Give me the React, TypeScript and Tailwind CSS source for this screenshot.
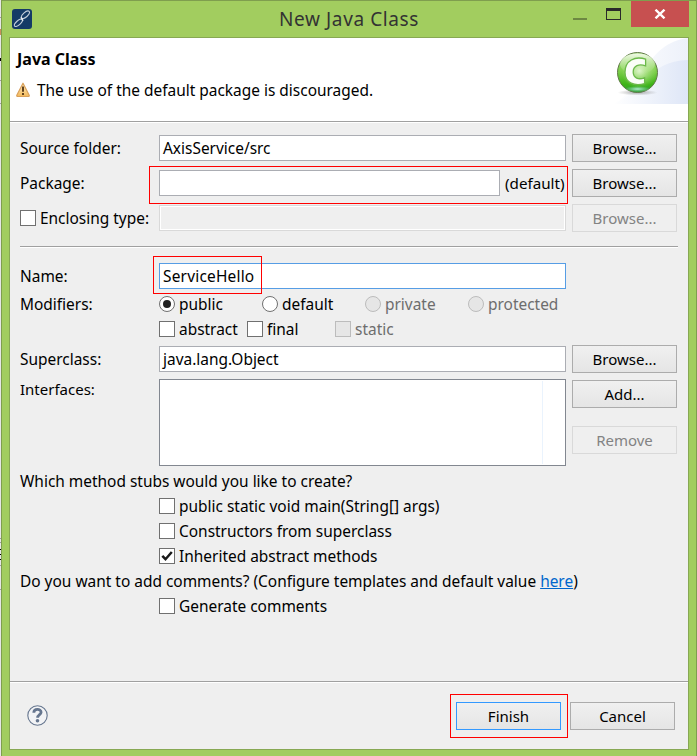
import type { ReactNode } from 'react'
import { clsx } from 'clsx'

function Txt({ children, className }: { children: ReactNode; className?: string }) {
  return <span className={clsx('whitespace-nowrap', className)}>{children}</span>
}

function Button({ children, disabled, primary }: { children: ReactNode; disabled?: boolean; primary?: boolean }) {
  return (
    <button
      disabled={disabled}
      className={clsx(
        'flex h-7 w-[105px] shrink-0 items-center justify-center border text-[15px] leading-4 whitespace-nowrap',
        disabled
          ? 'border-[#d9d9d9] bg-[#efefef] text-[#838383]'
          : 'bg-gradient-to-b from-[#f0f0f0] to-[#e5e5e5] text-black',
        !disabled && (primary ? 'border-[#3399ff]' : 'border-[#acacac]'),
      )}
    >
      {children}
    </button>
  )
}

function Field({ value, className }: { value?: string; className?: string }) {
  return (
    <div className={clsx('flex h-[26px] items-center border pl-[3px] leading-4', className ?? 'w-[407px] border-[#abadb3] bg-white')}>
      {value && <Txt>{value}</Txt>}
    </div>
  )
}

function Check({ label, checked, disabled, className }: { label: string; checked?: boolean; disabled?: boolean; className?: string }) {
  return (
    <label className={clsx('flex h-4 items-center gap-1', disabled && 'text-[#6d6d6d]', className)}>
      <span
        className={clsx(
          'flex size-4 shrink-0 items-center justify-center border',
          disabled ? 'border-[#bcbcbc] bg-[#e6e6e6]' : 'border-[#707070] bg-white',
        )}
      >
        {checked && (
          <svg width="14" height="14" viewBox="0 0 14 14" fill="none">
            <path d="M2.3 6.8 5.5 10.2 11.8 3" stroke="#1a1a1a" strokeWidth="2.5" />
          </svg>
        )}
      </span>
      <Txt>{label}</Txt>
    </label>
  )
}

function Radio({ label, checked, disabled }: { label: string; checked?: boolean; disabled?: boolean }) {
  return (
    <label className={clsx('flex h-4 w-[103px] items-center gap-1', disabled && 'text-[#6d6d6d]')}>
      <span
        className={clsx(
          'flex size-4 shrink-0 items-center justify-center rounded-full border',
          disabled ? 'border-[#bcbcbc] bg-[#e6e6e6]' : 'border-[#707070] bg-white',
        )}
      >
        {checked && <span className="size-2 rounded-full bg-[#212121]" />}
      </span>
      <Txt>{label}</Txt>
    </label>
  )
}

function Separator({ className }: { className?: string }) {
  return <div className={clsx('h-0.5 border-t border-[#a0a0a0] bg-white', className)} />
}

function Label({ children }: { children: ReactNode }) {
  return <div className="w-[139px] shrink-0 whitespace-nowrap">{children}</div>
}

function AppIcon() {
  return (
    <svg width="20" height="20" viewBox="0 0 20 20" fill="none">
      <rect x="0" y="0" width="20" height="20" rx="3" fill="#143a66" />
      <ellipse cx="13.4" cy="5.8" rx="5" ry="2.3" transform="rotate(-42 13.4 5.8)" stroke="#c3cedb" strokeWidth="1.1" />
      <ellipse cx="6.4" cy="13.8" rx="5" ry="2.1" transform="rotate(-42 6.4 13.8)" stroke="#c3cedb" strokeWidth="1.1" />
      <path d="M9.3 8.2C9.2 10.2 11 9.6 10.7 11.8" stroke="#e3e9f0" strokeWidth="1.4" />
    </svg>
  )
}

function WarningIcon() {
  return (
    <svg width="14" height="16" viewBox="0 0 14 16">
      <defs>
        <linearGradient id="warn" x1="0" y1="0" x2="0" y2="1">
          <stop offset="0" stopColor="#fff0c4" />
          <stop offset="1" stopColor="#f3b95a" />
        </linearGradient>
      </defs>
      <path d="M7 1.2 13.2 13.2Q13.5 14.5 12.3 14.5H1.7Q.5 14.5.8 13.2Z" fill="url(#warn)" stroke="#d9a05a" strokeWidth="1.2" strokeLinejoin="round" />
      <path d="M7 4.5V9.8M7 11V13" stroke="#593a1a" strokeWidth="1.9" />
    </svg>
  )
}

function ClassBanner() {
  return (
    <svg width="75" height="66" viewBox="0 0 75 66">
      <defs>
        <linearGradient id="sweep" x1="0" y1="0" x2="1" y2="0">
          <stop offset="0" stopColor="#fff" />
          <stop offset="1" stopColor="#dee6f7" />
        </linearGradient>
        <linearGradient id="sweepLight" x1="0" y1="0" x2="1" y2="0">
          <stop offset="0" stopColor="#fff" />
          <stop offset="1" stopColor="#edf1fa" />
        </linearGradient>
        <linearGradient id="ball" x1="0" y1="0" x2="0" y2="1">
          <stop offset="0" stopColor="#a9de82" />
          <stop offset=".45" stopColor="#7fd04c" />
          <stop offset=".8" stopColor="#3db316" />
          <stop offset="1" stopColor="#2f9d3c" />
        </linearGradient>
        <radialGradient id="glow" cx=".55" cy=".45" r=".5">
          <stop offset="0" stopColor="#e2f7cf" />
          <stop offset="1" stopColor="#a6e07c" stopOpacity="0" />
        </radialGradient>
        <linearGradient id="gloss" x1="0" y1="0" x2="0" y2="1">
          <stop offset="0" stopColor="#f0fae6" />
          <stop offset="1" stopColor="#c3eaa5" stopOpacity="0" />
        </linearGradient>
        <radialGradient id="shade">
          <stop offset="0" stopColor="#777" stopOpacity=".6" />
          <stop offset="1" stopColor="#777" stopOpacity="0" />
        </radialGradient>
        <radialGradient id="foot">
          <stop offset="0" stopColor="#b4ecd6" />
          <stop offset="1" stopColor="#7ed49c" stopOpacity="0" />
        </radialGradient>
      </defs>
      <path d="M0 66C30 52 32 5 75 0V66Z" fill="url(#sweepLight)" />
      <path d="M0 66C30 55 34 23 75 22V66Z" fill="url(#sweep)" />
      <ellipse cx="24.5" cy="54.5" rx="20" ry="3" fill="url(#shade)" />
      <circle cx="24.5" cy="34.5" r="20" fill="url(#ball)" stroke="#62794a" />
      <circle cx="24.5" cy="34.5" r="18" fill="url(#glow)" />
      <ellipse cx="24.5" cy="26" rx="17.5" ry="10.5" fill="url(#gloss)" />
      <ellipse cx="24.5" cy="51" rx="13" ry="3" fill="url(#foot)" />
      <path
        d="M32.6 21.2V27.8C26 25.6 20.2 27.6 20.2 34C20.2 40.2 25.5 42 31.6 39.8V45.6C22 48.6 12 45.2 12 34.2C12 22.6 22 17.6 32.6 21.2Z"
        fill="#fbfef8"
        stroke="#6cb94a"
        strokeWidth="1.3"
      />
    </svg>
  )
}

function HelpIcon() {
  return (
    <svg width="21" height="21" viewBox="0 0 21 21" fill="none">
      <circle cx="10.5" cy="10.5" r="9.7" fill="#f2f3f5" stroke="#66768f" strokeWidth="1.1" />
      <path d="M6.8 7.7C6.8 3.4 14.1 3.4 14.1 7.2C14.1 9.6 10.6 9.6 10.6 12.8" stroke="#66768f" strokeWidth="2.8" />
      <circle cx="10.5" cy="15.8" r="1.8" fill="#66768f" />
    </svg>
  )
}

function TitleBar() {
  return (
    <div className="relative flex h-9 items-start">
      <div className="pt-2 pl-2.5">
        <AppIcon />
      </div>
      <div className="absolute inset-x-0 top-1.5 text-center text-[19px] leading-6 tracking-[0.6px] text-[#333]">New Java Class</div>
      <div className="ml-auto flex pr-[7px]">
        <div className="mt-[17px] mr-[19px] h-0.5 w-3.5 bg-[#6d8842]" />
        <div className="mt-[7px] mr-2.5 h-3 w-[15px] border border-t-3 border-[#2a2a2a]" />
        <div className="flex h-[26px] w-[58px] items-center justify-center bg-[#c75050]">
          <svg width="12" height="10" viewBox="0 0 12 10" className="-ml-px">
            <path d="M1.5.7 10.5 9.3M10.5.7 1.5 9.3" stroke="#fff" strokeWidth="2.4" />
          </svg>
        </div>
      </div>
    </div>
  )
}

// one-pixel edge of the editor window behind the dialog
function BackgroundEdge() {
  return (
    <div className="flex w-px shrink-0 flex-col">
      <div className="mt-[17px] h-px bg-[#a0a0a0]" />
      <div className="mt-[11px] h-1.5 bg-[#c98d5a]" />
      <div className="mt-[23px] h-[3px] bg-black" />
      <div className="mt-[19px] h-px bg-[#a0a0a0]" />
      <div className="mt-[22px] h-px bg-[#a0a0a0]" />
      <div className="mt-[434px] h-px bg-[#a0a0a0]" />
      <div className="mt-[3px] h-px bg-[#a0a0a0]" />
      <div className="mt-[6px] h-px bg-black" />
      <div className="mt-[4px] h-px bg-black" />
      <div className="mt-[4px] h-px bg-black" />
      <div className="mt-[5px] h-px bg-[#a0a0a0]" />
      <div className="mt-[23px] h-px bg-[#a0a0a0]" />
    </div>
  )
}

export default function App() {
  return (
    <div className="flex h-[756px] w-[697px] overflow-hidden bg-[#e6e6e6] font-['Noto_Sans','Open_Sans',sans-serif] text-[15.45px] leading-4 text-black">
      <BackgroundEdge />
      <div className="h-full w-[696px] shrink-0 border-x border-t border-[#7f9e4e] bg-[#a2cd5f] px-[7px]">
        <div className="-mx-[7px]">
          <TitleBar />
        </div>
        <div className="h-[713px] w-[680px] border border-[#87a853] bg-[#efefef]">
          <header className="flex h-[83px] justify-between bg-white">
            <div className="pt-[13px] pl-1.5">
              <div className="pl-px text-base leading-4 font-bold">Java Class</div>
              <div className="mt-[14px] flex items-center gap-[7px]">
                <WarningIcon />
                <Txt className="pt-px">The use of the default package is discouraged.</Txt>
              </div>
            </div>
            <ClassBanner />
          </header>
          <Separator />

          <main className="flex h-[558px] flex-col pt-[11px] pl-2.5">
            <div className="flex h-7 items-center">
              <Label>Source folder:</Label>
              <Field value="AxisService/src" />
              <div className="ml-1.5">
                <Button>Browse...</Button>
              </div>
            </div>
            <div className="relative mt-[7px] flex h-7 items-center">
              <Label>Package:</Label>
              <Field className="w-[341px] border-[#abadb3] bg-white" />
              <div className="w-[66px] pl-[5px] text-[15.2px]">
                <Txt>(default)</Txt>
              </div>
              <div className="ml-1.5">
                <Button>Browse...</Button>
              </div>
              <div className="absolute -top-[3px] left-[129px] h-[38px] w-[419px] border border-[#ff0000]" />
            </div>
            <div className="mt-[7px] flex h-7 items-center">
              <Check label="Enclosing type:" className="w-[139px]" />
              <Field className="w-[407px] border-[#d9d9d9] bg-[#efefef] inset-ring inset-ring-white" />
              <div className="ml-1.5">
                <Button disabled>Browse...</Button>
              </div>
            </div>

            <Separator className="mt-[14px] w-[658px] shrink-0" />

            <div className="relative mt-[15px] flex h-[26px] items-center">
              <Label>Name:</Label>
              <Field value="ServiceHello" className="w-[407px] border-[#569de5] bg-white tracking-[0.2px]" />
              <div className="absolute -top-[7px] left-[133px] h-[38px] w-[109px] border border-[#ff0000]" />
            </div>
            <div className="mt-[7px] flex h-4 items-center">
              <Label>Modifiers:</Label>
              <Radio label="public" checked />
              <Radio label="default" />
              <Radio label="private" disabled />
              <Radio label="protected" disabled />
            </div>
            <div className="mt-[9px] flex pl-[139px]">
              <Check label="abstract" className="w-[88px]" />
              <Check label="final" className="w-[88px]" />
              <Check label="static" disabled />
            </div>
            <div className="mt-2 flex h-7 items-center">
              <Label>Superclass:</Label>
              <Field value="java.lang.Object" />
              <div className="ml-1.5">
                <Button>Browse...</Button>
              </div>
            </div>
            <div className="mt-1.5 flex h-[87px]">
              <div className="pt-0.5 text-[15px]">
                <Label>Interfaces:</Label>
              </div>
              <div className="flex w-[407px] justify-end border border-[#828790] bg-white py-px pr-[22px]">
                <div className="w-px bg-[#eaf3fd]" />
              </div>
              <div className="ml-1.5 flex flex-col gap-[18px] pt-px">
                <Button>Add...</Button>
                <Button disabled>Remove</Button>
              </div>
            </div>

            <div className="mt-[7px] h-4">
              <Txt>Which method stubs would you like to create?</Txt>
            </div>
            <div className="mt-[9px] flex flex-col gap-[9px] pl-[139px]">
              <Check label="public static void main(String[] args)" />
              <Check label="Constructors from superclass" />
              <Check label="Inherited abstract methods" checked />
            </div>
            <div className="mt-[9px] h-4">
              <Txt>
                Do you want to add comments? (Configure templates and default value{' '}
                <a className="text-[#0066cc] underline">here</a>)
              </Txt>
            </div>
            <div className="mt-[9px] pl-[139px]">
              <Check label="Generate comments" />
            </div>
          </main>

          <Separator />
          <footer className="flex h-[66px] items-start justify-between pt-[11px] pr-[13px] pl-[17px]">
            <div className="pt-[11px]">
              <HelpIcon />
            </div>
            <div className="flex">
              <div className="h-11 w-[118px] border border-[#ff0000] pt-[7px] pl-[5px]">
                <Button primary>Finish</Button>
              </div>
              <div className="pt-2 pl-0.5">
                <Button>Cancel</Button>
              </div>
            </div>
          </footer>
        </div>
      </div>
    </div>
  )
}
